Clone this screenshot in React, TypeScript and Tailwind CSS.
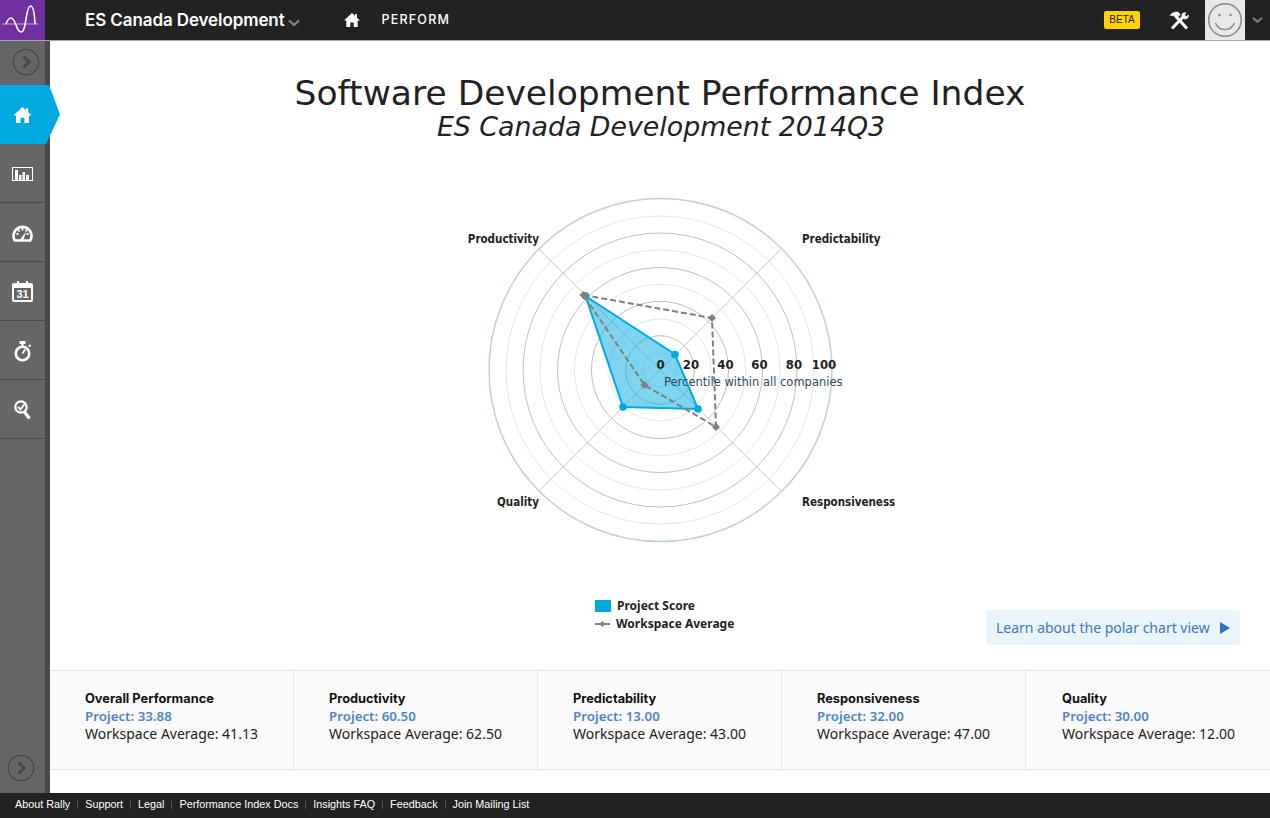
const CX = 660;
const CY = 370;
const OX = 480; // chart svg left edge on the page
const OY = 190; // chart svg top edge on the page

const MINOR = [17, 51, 85.5, 120, 154];
const MAJOR = [34.3, 68.5, 102.5, 137];

const PROJECT = [
  [585.5, 296],
  [675, 354.5],
  [698, 409],
  [623, 407],
];
const AVERAGE = [
  [583.5, 295],
  [712, 318],
  [716, 427],
  [644.5, 385],
];

const STATS = [
  { title: 'Overall Performance', project: '33.88', average: '41.13' },
  { title: 'Productivity', project: '60.50', average: '62.50' },
  { title: 'Predictability', project: '13.00', average: '43.00' },
  { title: 'Responsiveness', project: '32.00', average: '47.00' },
  { title: 'Quality', project: '30.00', average: '12.00' },
];

const FOOTER_LINKS = ['About Rally', 'Support', 'Legal', 'Performance Index Docs', 'Insights FAQ', 'Feedback', 'Join Mailing List'];

function Chevron({ className }: { className: string }) {
  return (
    <svg viewBox="0 0 12 8" className={className} fill="none" stroke="currentColor" strokeWidth="2.4">
      <path d="M1 1.5 6 6l5-4.5" />
    </svg>
  );
}

function CircleArrow({ className }: { className: string }) {
  return (
    <svg viewBox="0 0 28 28" className={className} fill="none">
      <circle cx="14" cy="14" r="12.7" stroke="#484848" strokeWidth="1.2" />
      <path d="M11.5 8.5 17 14l-5.5 5.5" stroke="#484848" strokeWidth="3" />
    </svg>
  );
}

function HomeIcon({ className }: { className: string }) {
  return (
    <svg viewBox="0 0 16 14" className={className} fill="currentColor">
      <path d="M8 0 0 7.500h2.300V14h4V9.500h3.400V14h4V7.500H16l-3-2.800V1h-2v1.800z" />
    </svg>
  );
}

function ToolsIcon() {
  return (
    <svg viewBox="0 0 21 19" className="h-[19px] w-[21px]" fill="none" stroke="#ffffff">
      {/* martelo */}
      <path d="M7 5.500 18 17.500" strokeWidth="3" />
      <path d="M1 4.500C3 1.500 6 .5 9 1l2.500 2.500-4.500 4-2-2.500C4 4.500 2.500 4.500 1 4.500z" fill="#ffffff" strokeWidth="0.5" />
      {/* chave */}
      <path d="M14 6 3 17.500" strokeWidth="3" />
      <path d="M13.500 2.500a3.600 3.600 0 0 0 2 5.500c2.500.5 4.500-1.500 4-4.200L17.500 5.500 15.500 4l1.500-2.300c-1.500-.2-2.700 0-3.500.8z" fill="#ffffff" strokeWidth="0.5" />
    </svg>
  );
}

function Logo() {
  return (
    <svg viewBox="0 0 45 40" className="h-10 w-[45px]" fill="none">
      <path d="M2 24h36" stroke="#c9a8dc" strokeWidth="1" />
      <path
        d="M6 24c1.500-4 3-6 5-6s3.500 3 5 7 3 7 5 7c3 0 4-6 5-13 1-6 2-13 4.500-13 3 0 4 7 4.500 18"
        stroke="#ffffff"
        strokeWidth="1.600"
      />
    </svg>
  );
}

function ChartIcon() {
  return (
    <svg viewBox="0 0 21 14" className="h-[14px] w-[21px]" fill="none">
      <rect width="21" height="14" fill="#ffffff" />
      <path d="M1 1h19v12H1z" fill="#666666" />
      <path d="M3 13V3h3v10zM7 13V8h2.500v5zM10.500 13V5H13v8zM14 13V8h3v5z" fill="#ffffff" />
    </svg>
  );
}

function GaugeIcon() {
  return (
    <svg viewBox="0 0 21 17" className="h-[17px] w-[21px]" fill="none" stroke="#ffffff">
      <path d="M2.800 15.500A9 9 0 1 1 18.200 15.500z" strokeWidth="2.600" />
      <path d="M10.500 3v2.500M4.500 8.500 6.500 9.500M16.500 8.500l-2 1M6 4.500l1.500 2M15 4.500l-1.500 2" strokeWidth="1.800" />
      <path d="M8 14.500 14 6.500 11.500 15z" fill="#ffffff" stroke="none" />
    </svg>
  );
}

function CalendarIcon() {
  return (
    <div className="relative flex h-[19px] w-[21px] items-end justify-center rounded-[2px] border-2 border-t-[5px] border-white bg-[#666666]">
      <span className="absolute left-[3px] top-[-7px] h-1 w-[2px] bg-white" />
      <span className="absolute right-[3px] top-[-7px] h-1 w-[2px] bg-white" />
      <span className="mb-[-1px] font-['Liberation_Sans',sans-serif] text-[11px] font-bold leading-[13px] text-white">31</span>
    </div>
  );
}

function StopwatchIcon() {
  return (
    <svg viewBox="0 0 20 21" className="h-[21px] w-5" fill="none" stroke="#ffffff">
      <circle cx="9.500" cy="12.500" r="6.700" strokeWidth="2.600" />
      <path d="M6.500 1.500h6" strokeWidth="3" />
      <path d="M9.500 2v3.500M16 4l1.500 1.500" strokeWidth="2.200" />
      <path d="M9.500 12.500 12 8.500" strokeWidth="1.800" />
    </svg>
  );
}

function SearchCheckIcon() {
  return (
    <svg viewBox="0 0 17 20" className="h-5 w-[17px]" fill="none" stroke="#ffffff">
      <circle cx="7" cy="7" r="5.700" strokeWidth="2.200" />
      <path d="M4 7l2.500 2.500L10.500 4" strokeWidth="2" />
      <path d="M10.500 12l5 6.500" strokeWidth="3.200" />
    </svg>
  );
}

function Smiley() {
  return (
    <svg viewBox="0 0 40 40" className="h-10 w-10" fill="none" stroke="#8c8c8c">
      <circle cx="20" cy="20" r="16.300" strokeWidth="1.600" />
      <circle cx="14.500" cy="15" r="1.300" fill="#8c8c8c" stroke="none" />
      <circle cx="25.500" cy="15" r="1.300" fill="#8c8c8c" stroke="none" />
      <path d="M10.500 23c2 5 5.500 6.500 9.500 6.500s7.500-1.500 9.500-6.500" strokeWidth="1.600" />
    </svg>
  );
}

function RadarChart() {
  const toPoints = (list: number[][]) => list.map(([x, y]) => `${x - OX},${y - OY}`).join(' ');
  const cx = CX - OX;
  const cy = CY - OY;
  const axis = 121;

  return (
    <svg width="440" height="370" viewBox="0 0 440 370" className="block overflow-visible font-['DejaVu_Sans_Condensed','DejaVu_Sans',sans-serif]">
      {MINOR.map((r) => (
        <circle key={r} cx={cx} cy={cy} r={r} fill="none" stroke="#e6e6e6" strokeWidth="1" />
      ))}
      {MAJOR.map((r) => (
        <circle key={r} cx={cx} cy={cy} r={r} fill="none" stroke="#c0c0c0" strokeWidth="1" />
      ))}
      <circle cx={cx + 0.5} cy={cy} r="171.500" fill="none" stroke="#c0d0e0" strokeWidth="1.500" />
      <path
        d={`M${cx - axis} ${cy - axis}L${cx + axis} ${cy + axis}M${cx + axis} ${cy - axis}L${cx - axis} ${cy + axis}`}
        stroke="#cccccc"
        strokeWidth="1"
      />
      <polygon points={toPoints(PROJECT)} fill="#00a9e0" fillOpacity="0.5" stroke="#00a9e0" strokeWidth="2" />
      {PROJECT.map(([x, y]) => (
        <circle key={x} cx={x - OX} cy={y - OY} r="3.800" fill="#00a9e0" />
      ))}
      <polygon points={toPoints(AVERAGE)} fill="none" stroke="#7f7f7f" strokeWidth="2" strokeDasharray="6 3" />
      {AVERAGE.map(([x, y]) => (
        <path key={x} d={`M${x - OX} ${y - OY - 4}l4 4-4 4-4-4z`} fill="#7f7f7f" />
      ))}
      {[
        ['0', 660.5],
        ['20', 691],
        ['40', 725.5],
        ['60', 759.5],
        ['80', 794],
        ['100', 824],
      ].map(([label, x]) => (
        <text key={label} x={Number(x) - OX} y={179} textAnchor="middle" fontSize="13" fontWeight="700" fill="#222222">
          {label}
        </text>
      ))}
      <text x={184} y={196} fontSize="11.500" fill="#2f4760" className="font-['DejaVu_Sans',sans-serif]">
        Percentile within all companies
      </text>
      <text x={59} y={53} textAnchor="end" fontSize="11.500" fontWeight="700" fill="#222222">
        Productivity
      </text>
      <text x={322} y={53} fontSize="11.500" fontWeight="700" fill="#222222">
        Predictability
      </text>
      <text x={322} y={316} fontSize="11.500" fontWeight="700" fill="#222222">
        Responsiveness
      </text>
      <text x={59} y={316} textAnchor="end" fontSize="11.500" fontWeight="700" fill="#222222">
        Quality
      </text>
    </svg>
  );
}

function NavItem({ children }: { children: React.ReactNode }) {
  return <div className="flex h-[59px] w-[45px] items-center justify-center border-b border-[#4a4a4a] pt-[2px]">{children}</div>;
}

export default function App() {
  return (
    <div className="flex h-[818px] w-[1270px] flex-col overflow-hidden bg-white font-['Noto_Sans',sans-serif] text-[#222222]">
      {/* Barra superior */}
      <header className="flex h-[41px] shrink-0 items-center border-b border-[#a8a8a8] bg-[#222222] text-white">
        <div className="h-10 w-[45px] shrink-0 bg-[#7030a0]">
          <Logo />
        </div>
        <div className="ml-10 mt-[1px] font-['Inter',sans-serif] text-[17px] font-semibold tracking-[-0.1px]">ES Canada Development</div>
        <Chevron className="ml-[3px] mt-[6px] h-2 w-3 text-[#7c7c7c]" />
        <HomeIcon className="ml-[44px] h-[14px] w-4" />
        <div className="ml-[22px] font-['Inter',sans-serif] text-[12.500px] font-medium tracking-[1.2px]">PERFORM</div>
        <div className="ml-auto flex h-[18px] w-9 items-center justify-center rounded-[2px] bg-[#ffd400] font-['Liberation_Sans',sans-serif] text-[10px] leading-none text-[#222222]">
          BETA
        </div>
        <div className="ml-[29px]">
          <ToolsIcon />
        </div>
        <div className="ml-[15px] h-10 w-10 bg-[#e8e8e8]">
          <Smiley />
        </div>
        <Chevron className="ml-[7px] mr-[7px] h-2 w-[11px] text-[#7c7c7c]" />
      </header>

      <div className="flex min-h-0 flex-1">
        {/* Menu lateral */}
        <aside className="flex w-[50px] shrink-0 flex-col border-r-[5px] border-[#4a4a4a] bg-[#666666]">
          <div className="flex h-11 w-[45px] shrink-0 items-center justify-center pb-[2px]">
            <CircleArrow className="ml-[7px] h-7 w-7" />
          </div>
          <div className="relative z-10 flex h-[59px] w-[60px] shrink-0 items-center bg-[#00a9e0] pl-[13px] text-white [clip-path:polygon(0_0,49px_0,60px_50%,46px_100%,0_100%)]">
            <HomeIcon className="h-4 w-[19px]" />
          </div>
          <NavItem>
            <ChartIcon />
          </NavItem>
          <NavItem>
            <GaugeIcon />
          </NavItem>
          <NavItem>
            <CalendarIcon />
          </NavItem>
          <NavItem>
            <StopwatchIcon />
          </NavItem>
          <NavItem>
            <SearchCheckIcon />
          </NavItem>
          <div className="mb-[11px] mt-auto pl-[7px]">
            <CircleArrow className="h-7 w-7" />
          </div>
        </aside>

        <main className="flex min-w-0 flex-1 flex-col">
          <h1 className="mt-[29px] text-center font-['DejaVu_Sans',sans-serif] text-[34.500px] font-normal leading-[46px] text-[#222222]">
            Software Development Performance Index
          </h1>
          <h2 className="mt-[-7px] pl-[2px] text-center font-['DejaVu_Sans',sans-serif] text-[26.800px] font-normal italic leading-[36px] text-[#222222]">
            ES Canada Development 2014Q3
          </h2>

          <div className="ml-[430px] mt-[45px]">
            <RadarChart />
          </div>

          {/* Legenda e link */}
          <div className="mt-[38px] flex h-[72px] items-start pr-[30px]">
            <div className="ml-[545px] flex flex-col gap-[2px] text-[12px] font-bold leading-4">
              <div className="flex items-center gap-[6px]">
                <span className="h-3 w-4 bg-[#00a9e0]" />
                Project Score
              </div>
              <div className="flex items-center gap-[6px]">
                <svg width="15" height="8" viewBox="0 0 15 8">
                  <path d="M0 4h15" stroke="#7f7f7f" strokeWidth="2" />
                  <path d="M7.500 1l3 3-3 3-3-3z" fill="#7f7f7f" />
                </svg>
                Workspace Average
              </div>
            </div>
            <div className="ml-auto mt-[12px] flex h-[35px] w-[254px] items-center rounded-[4px] bg-[#eaf5fb] pl-[10px] text-[14px] text-[#4078c0]">
              Learn about the polar chart view
              <svg width="10" height="12" viewBox="0 0 10 12" className="ml-[10px]">
                <path d="M0 0l10 6-10 6z" fill="#2f74c0" />
              </svg>
            </div>
          </div>

          {/* Resumo por dimensão */}
          <div className="grid h-[100px] shrink-0 grid-cols-[244px_244px_244px_244px_1fr] border-y border-[#e6e6e6] bg-[#fafafa]">
            {STATS.map((stat, index) => (
              <div key={stat.title} className={index < 4 ? 'border-r border-[#e6e6e6] pl-[35px] pt-[20px]' : 'pl-[36px] pt-[20px]'}>
                <div className="font-['Inter',sans-serif] text-[12.800px] font-bold leading-[16px] text-[#111111]">{stat.title}</div>
                <div className="text-[13.300px] font-semibold leading-[18px] text-[#4a86c8]">Project: {stat.project}</div>
                <div className="text-[14px] leading-[18px]">Workspace Average: {stat.average}</div>
              </div>
            ))}
          </div>
        </main>
      </div>

      {/* Rodapé */}
      <footer className="flex h-[25px] shrink-0 items-center bg-[#222222] pb-[2px] pl-[15px] font-['Liberation_Sans',sans-serif] text-[10.800px] text-white">
        {FOOTER_LINKS.map((link, index) => (
          <div key={link} className="flex items-center">
            {index > 0 && <span className="mx-[7px] h-2 w-px bg-[#555555]" />}
            {link}
          </div>
        ))}
      </footer>
    </div>
  );
}
